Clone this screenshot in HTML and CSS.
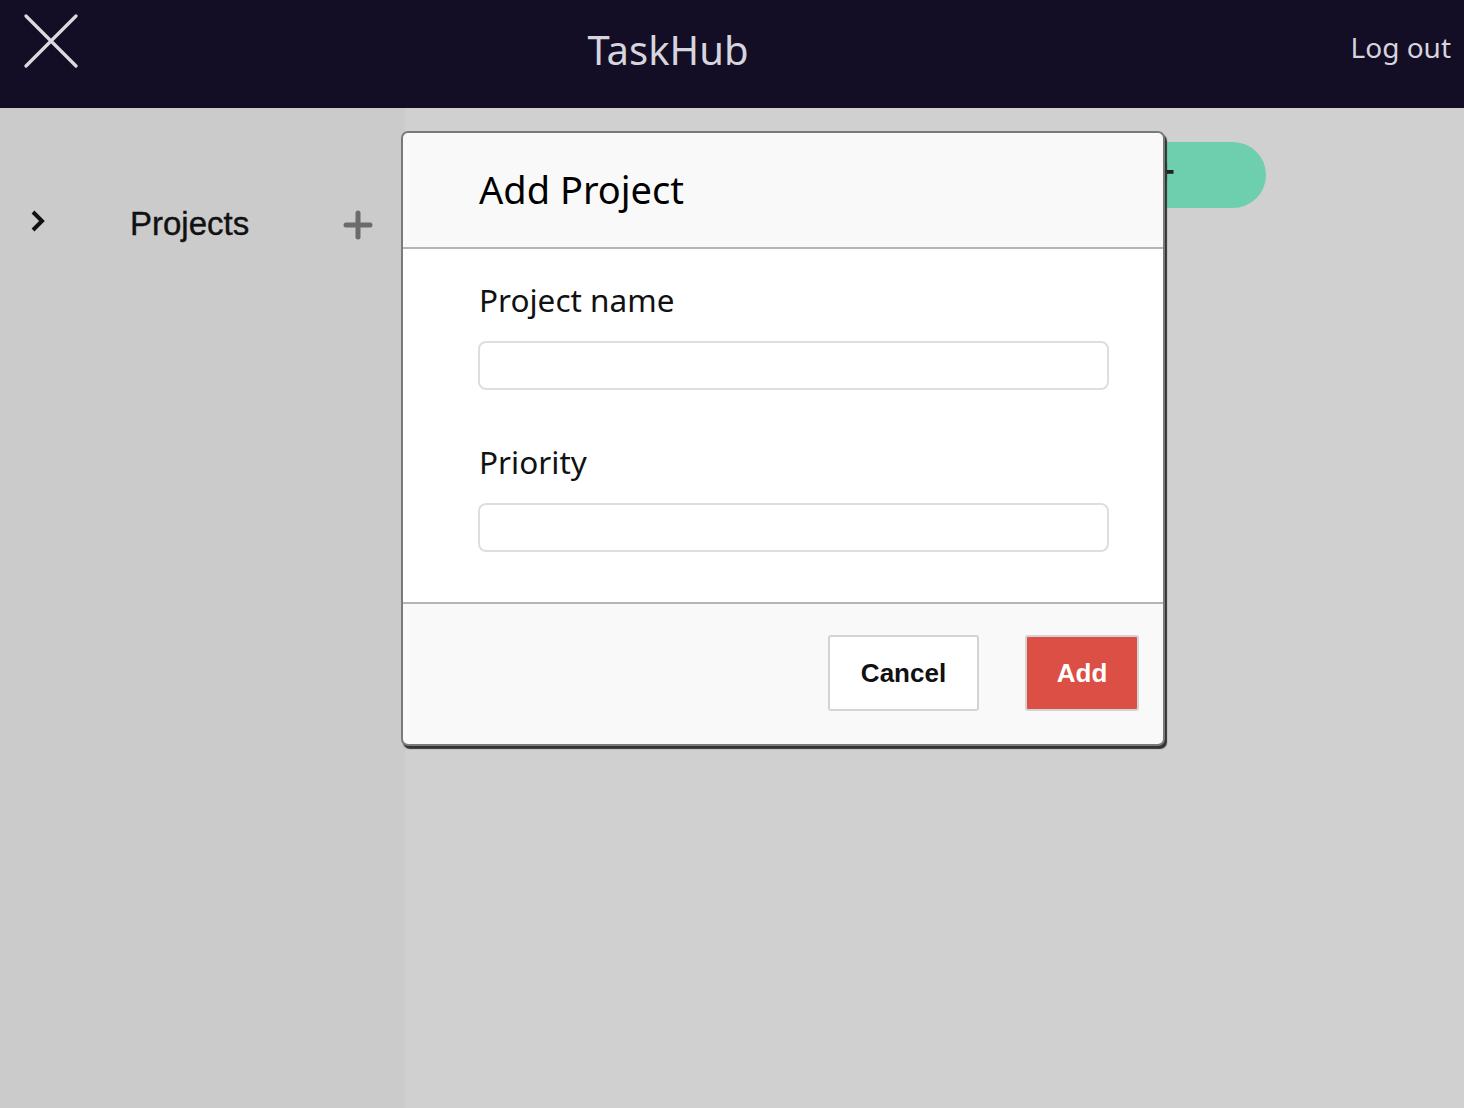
FILE: index.html
```html
<!DOCTYPE html>
<html>
<head>
<meta charset="utf-8">
<link rel="stylesheet" href="styles.css">
</head>
<body>
<header class="topbar">
  <button class="close-btn" aria-label="Close">
    <svg width="54" height="54" viewBox="0 0 54 54"><path d="M2 2 L52 52 M52 2 L2 52" stroke="#dcdce0" stroke-width="3.2" stroke-linecap="round" fill="none"/></svg>
  </button>
  <div class="brand">TaskHub</div>
  <a class="logout">Log out</a>
</header>
<div class="layout">
  <aside class="sidebar">
    <div class="proj-row">
      <svg class="chev" width="16" height="24" viewBox="0 0 16 24"><path d="M3 3 L12 12 L3 21" stroke="#111" stroke-width="4" fill="none" stroke-linejoin="miter"/></svg>
      <span class="proj-label">Projects</span>
      <svg class="plus" width="30" height="30" viewBox="0 0 30 30"><path d="M15 3 V27 M3 15 H27" stroke="#6b6b6b" stroke-width="5" stroke-linecap="round"/></svg>
    </div>
  </aside>
  <main class="main">
    <button class="pill"><span class="pill-plus">+</span></button>
  </main>
</div>
<div class="modal">
  <div class="modal-head"><h2>Add Project</h2></div>
  <div class="modal-body">
    <label class="field-label">Project name</label>
    <input class="field" type="text">
    <label class="field-label second">Priority</label>
    <input class="field" type="text">
  </div>
  <div class="modal-foot">
    <button class="btn cancel">Cancel</button>
    <button class="btn add">Add</button>
  </div>
</div>
</body>
</html>
```
FILE: styles.css
```css
* { box-sizing: border-box; }
html, body { margin: 0; padding: 0; height: 100%; }
body {
  font-family: "Noto Sans", "Open Sans", sans-serif;
  background: #d0d0d0;
  overflow: hidden;
}
.topbar {
  height: 108px;
  background: #130e25;
  display: flex;
  align-items: center;
  position: relative;
}
.close-btn {
  background: none;
  border: 0;
  padding: 0;
  margin-left: 24px;
  margin-top: -26px;
  width: 54px;
  height: 54px;
  display: block;
}
.brand {
  position: absolute;
  left: 0; right: 0;
  top: 22px;
  text-align: center;
  color: #d6d4dc;
  font-size: 40px;
  padding-right: 128px;
  pointer-events: none;
}
.logout {
  margin-left: auto;
  margin-right: 13px;
  margin-top: -14px;
  color: #d6d4dc;
  font-size: 28px;
}
.layout {
  display: flex;
  height: 1000px;
}
.sidebar {
  width: 405px;
  background: #cbcbcb;
  padding-top: 96px;
}
.proj-row {
  display: flex;
  align-items: center;
  height: 40px;
  padding-left: 30px;
}
.chev { margin-top: -6px; }
.proj-label {
  font-family: "Liberation Sans", Arial, sans-serif;
  font-size: 33px;
  color: #111;
  margin-left: 84px;
  -webkit-text-stroke: 0.4px #111;
}
.plus { margin-left: 94px; margin-top: 2px; }
.main {
  flex: 1;
  display: flex;
  justify-content: flex-end;
  align-items: flex-start;
  padding-top: 34px;
  padding-right: 198px;
}
.pill {
  width: 160px;
  height: 66px;
  border: 0;
  border-radius: 33px;
  background: #6ecfae;
  position: relative;
  padding: 0;
}
.pill-plus {
  position: absolute;
  left: 49px;
  top: 10px;
  font-family: "Liberation Sans", Arial, sans-serif;
  font-size: 34px;
  font-weight: bold;
  color: #222;
}
.modal {
  position: absolute;
  left: 401px;
  top: 131px;
  width: 764px;
  border: 2px solid #7a7a7a;
  border-radius: 7px;
  box-shadow: 2px 3px 1px #333;
  background: #f9f9f9;
  overflow: hidden;
}
.modal-head {
  height: 116px;
  border-bottom: 2px solid #b5b5b5;
  padding-left: 76px;
  display: flex;
  align-items: center;
}
.modal-head h2 {
  margin: 0;
  font-weight: normal;
  font-size: 38px;
  color: #000;
  margin-top: -2px;
}
.modal-body {
  background: #fff;
  padding: 29px 54px 50px 75px;
  display: flex;
  flex-direction: column;
  border-bottom: 2px solid #b5b5b5;
}
.field-label {
  font-size: 31.5px;
  color: #111;
  line-height: 44px;
  padding-left: 1px;
}
.field-label.second { margin-top: 50px; }
.field {
  margin-top: 19px;
  height: 49px;
  width: 631px;
  border: 2px solid #dedede;
  border-radius: 8px;
  background: #fff;
}
.modal-foot {
  height: 140px;
  display: flex;
  align-items: flex-start;
  justify-content: flex-end;
  padding-top: 31px;
  padding-right: 24px;
  gap: 46px;
}
.btn {
  font-family: "Liberation Sans", Arial, sans-serif;
  font-weight: bold;
  font-size: 26px;
  height: 76px;
  border-radius: 3px;
}
.cancel {
  width: 151px;
  background: #fff;
  border: 2px solid #d4d4d4;
  color: #111;
}
.add {
  width: 114px;
  background: #db4f45;
  border: 2px solid #d4d4d4;
  color: #fff;
}
```
